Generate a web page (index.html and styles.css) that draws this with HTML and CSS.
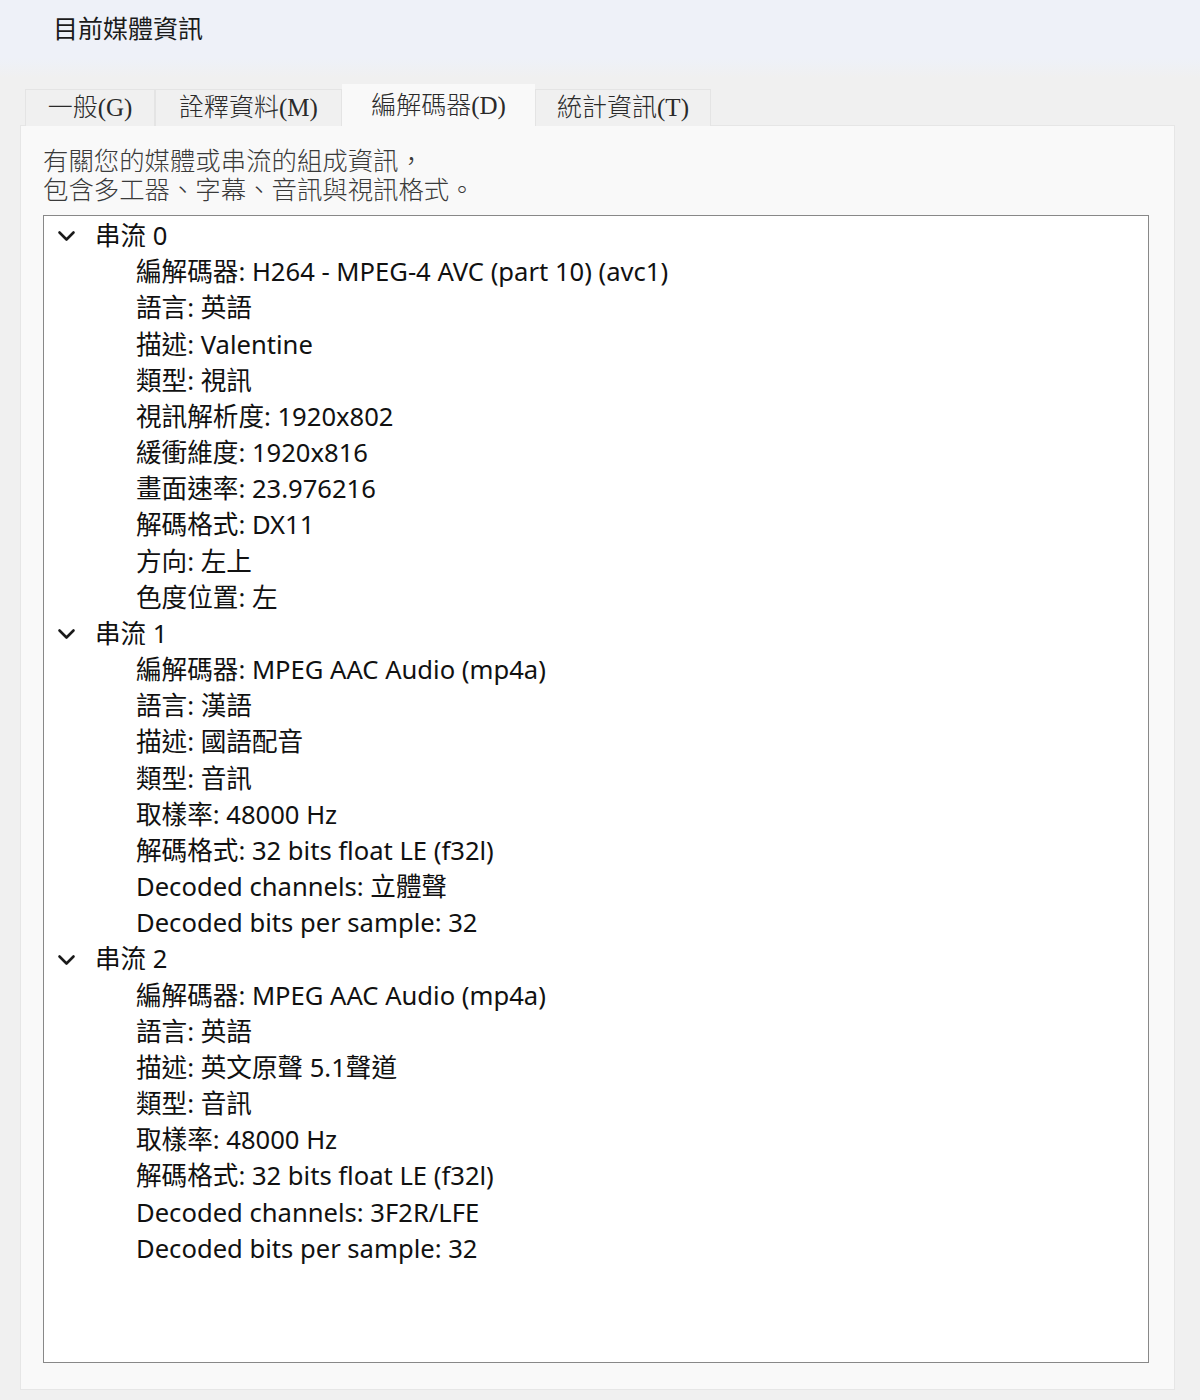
FILE: index.html
```html
<!DOCTYPE html>
<html lang="zh-Hant">
<head>
<meta charset="utf-8">
<title>目前媒體資訊</title>
<link rel="stylesheet" href="styles.css">
</head>
<body>
<div class="window">
  <div class="titlebar">目前媒體資訊</div>
  <div class="tabs">
    <div class="tab">一般(G)</div>
    <div class="tab">詮釋資料(M)</div>
    <div class="tab active">編解碼器(D)</div>
    <div class="tab">統計資訊(T)</div>
  </div>
  <div class="panel">
    <div class="desc">有關您的媒體或串流的組成資訊，<br>包含多工器、字幕、音訊與視訊格式。</div>
    <div class="tree">
      <div class="group">
        <div class="node"><svg class="chev" viewBox="0 0 18 12"><path d="M2 2.5 L9 9.5 L16 2.5"/></svg><span>串流 0</span></div>
        <div class="leaf">編解碼器: H264 - MPEG-4 AVC (part 10) (avc1)</div>
        <div class="leaf">語言: 英語</div>
        <div class="leaf">描述: Valentine</div>
        <div class="leaf">類型: 視訊</div>
        <div class="leaf">視訊解析度: 1920x802</div>
        <div class="leaf">緩衝維度: 1920x816</div>
        <div class="leaf">畫面速率: 23.976216</div>
        <div class="leaf">解碼格式: DX11</div>
        <div class="leaf">方向: 左上</div>
        <div class="leaf">色度位置: 左</div>
      </div>
      <div class="group">
        <div class="node"><svg class="chev" viewBox="0 0 18 12"><path d="M2 2.5 L9 9.5 L16 2.5"/></svg><span>串流 1</span></div>
        <div class="leaf">編解碼器: MPEG AAC Audio (mp4a)</div>
        <div class="leaf">語言: 漢語</div>
        <div class="leaf">描述: 國語配音</div>
        <div class="leaf">類型: 音訊</div>
        <div class="leaf">取樣率: 48000 Hz</div>
        <div class="leaf">解碼格式: 32 bits float LE (f32l)</div>
        <div class="leaf">Decoded channels: 立體聲</div>
        <div class="leaf">Decoded bits per sample: 32</div>
      </div>
      <div class="group">
        <div class="node"><svg class="chev" viewBox="0 0 18 12"><path d="M2 2.5 L9 9.5 L16 2.5"/></svg><span>串流 2</span></div>
        <div class="leaf">編解碼器: MPEG AAC Audio (mp4a)</div>
        <div class="leaf">語言: 英語</div>
        <div class="leaf">描述: 英文原聲 5.1聲道</div>
        <div class="leaf">類型: 音訊</div>
        <div class="leaf">取樣率: 48000 Hz</div>
        <div class="leaf">解碼格式: 32 bits float LE (f32l)</div>
        <div class="leaf">Decoded channels: 3F2R/LFE</div>
        <div class="leaf">Decoded bits per sample: 32</div>
      </div>
    </div>
  </div>
</div>
</body>
</html>
```
FILE: styles.css
```css
html, body {
  margin: 0;
  padding: 0;
}
body {
  background: #f0f0f0;
  width: 1200px;
  height: 1400px;
  overflow: hidden;
  color: #1a1a1a;
  font-family: "Noto Sans", "Noto Sans CJK TC", sans-serif;
}
.window {
  background: linear-gradient(#eef1f8 0, #eef1f8 58px, #f0f0f0 78px, #f0f0f0 100%);
  height: 1400px;
}
.titlebar {
  height: 58px;
  padding-left: 53px;
  font-size: 25px;
  line-height: 56px;
  color: #1b1b1b;
}
.tabs {
  display: flex;
  align-items: flex-end;
  margin-top: 26px;
  padding-left: 25px;
  height: 42px;
}
.tab {
  height: 37px;
  box-sizing: border-box;
  border: 1px solid #e4e4e4;
  border-bottom: none;
  background: #f0f0f0;
  font-family: "Liberation Serif", "Noto Sans CJK TC", serif;
  font-weight: 300;
  font-size: 25px;
  line-height: 36px;
  color: #2a2a2a;
  text-align: center;
}
.tab:nth-child(1) { width: 130px; }
.tab:nth-child(2) { width: 187px; }
.tab:nth-child(4) { width: 176px; }
.tab.active {
  width: 193px;
  height: 42px;
  background: #f9f9f9;
  border-color: #f9f9f9;
  line-height: 42px;
  position: relative;
  z-index: 1;
}
.panel {
  margin-left: 20px;
  width: 1155px;
  height: 1265px;
  box-sizing: border-box;
  background: #f9f9f9;
  border: 1px solid #e6e6e6;
  margin-top: -1px;
  padding: 21px 0 0 22px;
}
.desc {
  font-family: "Liberation Serif", "Noto Sans CJK TC", serif;
  font-weight: 300;
  font-size: 25.4px;
  line-height: 29px;
  color: #3a3a3a;
  height: 68px;
}
.tree {
  width: 1106px;
  height: 1148px;
  box-sizing: border-box;
  background: #ffffff;
  border: 1px solid #888888;
  padding-top: 2px;
  font-size: 25.6px;
  line-height: 36.18px;
  color: #111111;
}
.node {
  display: flex;
  align-items: center;
  height: 36.18px;
  padding-left: 13px;
}
.node span {
  margin-left: 19px;
}
.chev {
  width: 19px;
  height: 12px;
  fill: none;
  stroke: #1a1a1a;
  stroke-width: 2.6;
  stroke-linecap: round;
  stroke-linejoin: round;
}
.leaf {
  height: 36.18px;
  padding-left: 92px;
  white-space: nowrap;
}
```
